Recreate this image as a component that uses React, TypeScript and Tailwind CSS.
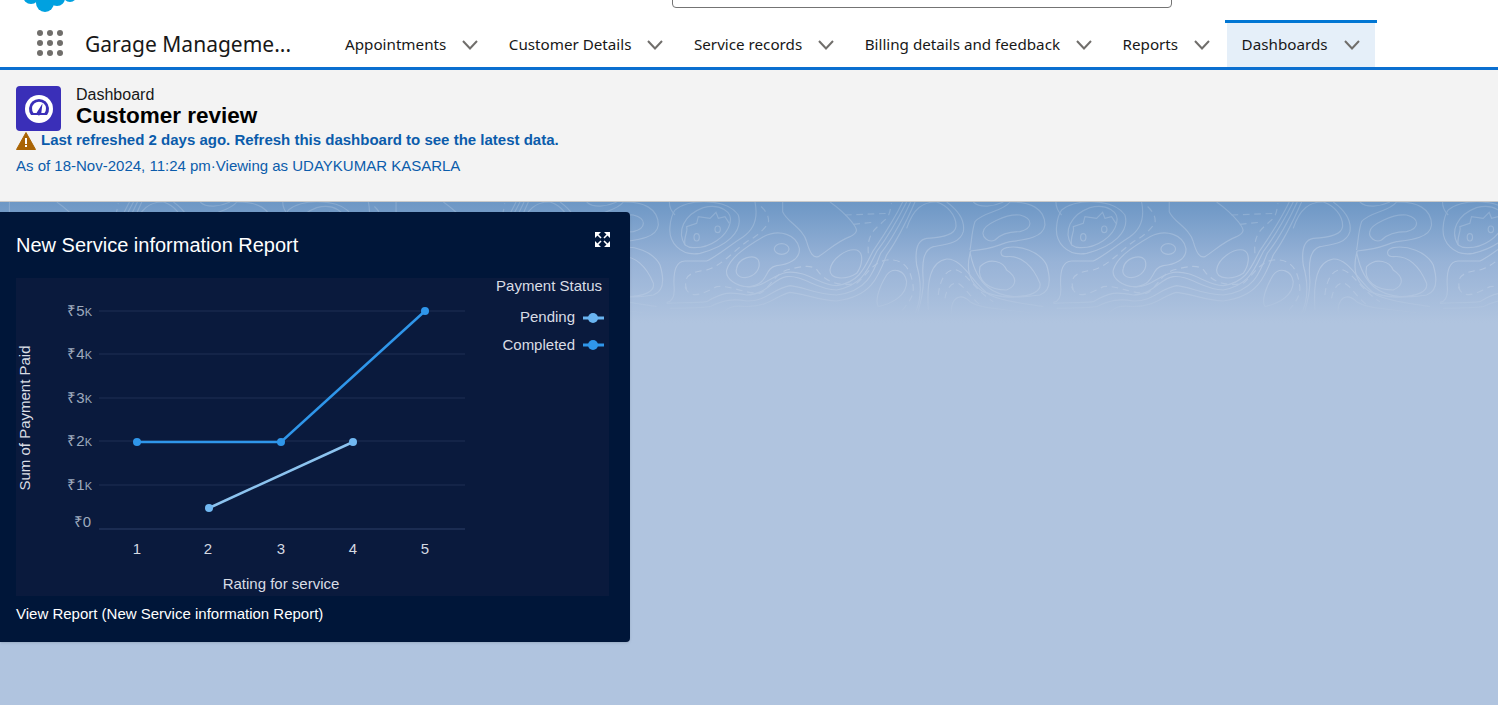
import React from "react";

const navItems = ["Appointments", "Customer Details", "Service records", "Billing details and feedback", "Reports"];

// contour lines of the banner, in 3x units, one tile is 1160 wide
const contours = [
  "M135 45 C180 10 290 10 325 60 C340 110 290 155 210 175 C150 185 115 140 120 95 C122 70 128 55 135 45",
  "M165 150 C140 110 160 60 220 38 C270 25 310 50 300 85 C290 125 240 160 190 158 C180 158 172 155 165 150",
  "M165 150 C160 125 175 110 170 95 L200 85 L205 65 L240 70 L258 52 L265 70 L285 65 L298 85",
  "M118 21 C118 40 125 50 135 60",
  "M375 21 C385 70 370 105 340 125 C300 150 260 185 230 198 L165 198 C140 198 130 225 132 270 C135 300 130 320 110 322",
  "M290 225 C300 190 340 160 400 125 C450 100 500 120 508 160 C512 195 470 210 440 212 C400 220 420 265 360 275 C320 278 285 250 290 225",
  "M320 220 C325 190 370 175 385 195 C395 220 375 245 345 248 C325 248 315 235 320 220",
  "M458 21 L458 50 C470 80 520 100 530 140 C540 175 550 190 565 185 C590 170 620 140 660 125 C690 110 680 100 665 80 C640 50 620 35 600 21",
  "M600 225 C605 190 650 160 680 165 C705 175 695 215 680 235 C650 255 600 255 600 225",
  "M830 21 C800 80 770 130 740 170 C715 220 700 270 620 285 C560 285 520 240 470 245 C430 250 410 300 350 300 C300 290 280 290 230 320 C190 325 150 322 110 325",
  "M818 21 C790 80 755 130 728 170 C705 215 690 262 620 272 C570 272 530 225 470 232 C425 240 400 280 350 275",
  "M842 21 C812 85 785 135 752 175 C730 235 710 290 620 300 C560 300 520 275 480 272 C430 280 410 320 350 318 C310 310 280 315 240 335 C200 340 160 340 120 340",
  "M855 21 C825 90 795 145 770 180 C745 245 725 305 620 318 C570 318 520 295 480 292 C440 300 420 335 350 335 C310 330 290 335 270 365",
  "M745 335 C735 320 745 280 770 240 C790 215 825 225 830 260 C830 300 790 325 745 335",
  "M830 100 C850 40 880 20 920 21 C950 30 980 60 978 95 C975 120 940 128 890 130 C860 135 855 170 860 210 C880 280 870 330 850 365",
  "M950 21 C990 50 1005 80 1000 110 C990 145 950 148 910 155 C880 165 875 200 880 260 C880 300 870 330 860 365",
  "M895 345 C890 260 900 200 950 192 C1000 190 1030 270 1080 300 C1120 320 1180 325 1240 335",
  "M965 360 C960 310 990 290 1020 320 C1060 345 1130 340 1240 360",
  "M1030 21 C1050 40 1090 35 1120 21",
  "M1140 21 C1200 20 1245 40 1245 90 C1240 130 1180 135 1140 140 C1100 150 1100 160 1022 168 C1010 210 1010 260 1060 290 C1110 310 1160 310 1230 300 C1260 290 1265 260 1250 210 C1230 170 1170 150 1130 158 C1105 165 1110 185 1130 185 C1175 180 1210 215 1230 265 C1235 290 1200 305 1150 305 C1100 300 1040 280 1020 170",
  "M1140 21 C1120 50 1060 50 1035 80 C1025 110 1025 140 1020 165",
  "M1060 110 C1060 90 1130 55 1170 60 C1210 70 1210 100 1170 110 C1130 110 1110 120 1095 135 C1075 145 1055 125 1060 110",
  "M1050 215 C1080 185 1120 200 1130 225 C1160 245 1165 270 1130 285 C1080 285 1040 260 1050 215",
];

const dashedContours = [
  "M170 285 C160 250 170 232 230 225 C270 215 310 170 350 140 C380 125 400 105 415 85 C420 60 400 40 388 30",
  "M165 275 C180 320 230 290 260 275 C300 270 340 295 390 295 C420 280 430 240 470 225 C510 215 550 205 565 230 C590 265 640 275 680 265 C710 240 730 200 770 195 C820 190 845 220 850 280 C850 310 830 330 805 360",
  "M645 60 L780 55",
  "M670 88 L730 82",
  "M715 175 C710 110 740 100 770 70 C785 50 780 30 785 25",
  "M925 300 C930 250 950 220 980 225 C1010 235 1040 290 1090 320",
  "M945 310 C950 280 965 260 985 265 C1010 280 1030 320 1060 335",
];

const tiles = [-2, -1, 0, 1, 2];

function ContourBanner() {
  return (
    <svg className="absolute left-0 top-0 h-[130px] w-full" viewBox="0 0 1498 130" fill="none">
      <defs>
        <linearGradient id="fade" x1="0" y1="0" x2="0" y2="1">
          <stop offset="0%" stopColor="#fff" stopOpacity={0.16} />
          <stop offset="50%" stopColor="#fff" stopOpacity={0.22} />
          <stop offset="72%" stopColor="#fff" stopOpacity={0.12} />
          <stop offset="88%" stopColor="#fff" stopOpacity={0} />
        </linearGradient>
        <mask id="fadeMask">
          <rect width="1498" height="130" fill="url(#fade)" />
        </mask>
      </defs>
      <g mask="url(#fadeMask)" stroke="#fff">
        {tiles.map((n) => (
          <g key={n} transform={`translate(${630 + n * 386.6} -7) scale(0.3333)`} strokeWidth={3.5}>
            {contours.map((d, i) => (
              <path key={i} d={d} />
            ))}
            {dashedContours.map((d, i) => (
              <path key={i} d={d} strokeDasharray="20 14" />
            ))}
            <ellipse cx="200" cy="127" rx="8" ry="11" />
            <ellipse cx="263" cy="103" rx="8" ry="10" />
            <ellipse cx="455" cy="162" rx="22" ry="16" />
          </g>
        ))}
      </g>
    </svg>
  );
}

function NavChevron() {
  return (
    <svg viewBox="0 0 16 10" className="ml-4 h-[10px] w-4" fill="none">
      <polyline points="1,1 8,8.5 15,1" stroke="#706e6b" strokeWidth={2} />
    </svg>
  );
}

const gridLines = [311, 354, 398, 441, 485];
const yLabels = [
  { y: 316, v: "₹5" },
  { y: 359, v: "₹4" },
  { y: 403, v: "₹3" },
  { y: 446, v: "₹2" },
  { y: 490, v: "₹1" },
];
const xLabels = [
  { x: 137, v: "1" },
  { x: 208, v: "2" },
  { x: 281, v: "3" },
  { x: 353, v: "4" },
  { x: 425, v: "5" },
];

function ServiceChart() {
  return (
    <svg viewBox="16 278 593 318" className="block h-[318px] w-[593px] bg-[#0a1a3d]" style={{ fontFamily: "'Liberation Sans', sans-serif" }}>
      {gridLines.map((y) => (
        <line key={y} x1="99" x2="465" y1={y} y2={y} stroke="#18284c" strokeWidth={1.5} />
      ))}
      <line x1="99" x2="465" y1="529" y2="529" stroke="#22335a" strokeWidth={1.5} />
      {yLabels.map((l) => (
        <text key={l.v} x="92" y={l.y} textAnchor="end" fontSize="15" fill="#9eaabd">
          {l.v}
          <tspan fontSize="11">K</tspan>
        </text>
      ))}
      <text x="91" y="527" textAnchor="end" fontSize="15" fill="#9eaabd">₹0</text>
      {xLabels.map((l) => (
        <text key={l.v} x={l.x} y="554" textAnchor="middle" fontSize="15" fill="#d4d9e2">{l.v}</text>
      ))}
      <text x="281" y="589" textAnchor="middle" fontSize="15" fill="#d9dde5">Rating for service</text>
      <text transform="translate(30 418) rotate(-90)" textAnchor="middle" fontSize="15" fill="#d9dde5">Sum of Payment Paid</text>

      <polyline points="137,442 281,442 425,311" fill="none" stroke="#2f96ea" strokeWidth={2.5} />
      <polyline points="209,508 353,442" fill="none" stroke="#8cc3ef" strokeWidth={2.5} />
      {[[137, 442], [281, 442], [425, 311]].map(([x, y]) => (
        <circle key={x} cx={x} cy={y} r={4} fill="#2f96ea" />
      ))}
      {[[209, 508], [353, 442]].map(([x, y]) => (
        <circle key={x} cx={x} cy={y} r={4} fill="#71b8f2" />
      ))}

      <text x="602" y="291" textAnchor="end" fontSize="15" fill="#d9dde5">Payment Status</text>
      <text x="575" y="322" textAnchor="end" fontSize="15" fill="#d9dde5">Pending</text>
      <text x="575" y="350" textAnchor="end" fontSize="15" fill="#d9dde5">Completed</text>
      <line x1="583" x2="604" y1="318" y2="318" stroke="#69b4f1" strokeWidth={3} />
      <circle cx="593" cy="318" r="5" fill="#69b4f1" />
      <line x1="583" x2="604" y1="345" y2="345" stroke="#2f96ea" strokeWidth={3} />
      <circle cx="593" cy="345" r="5" fill="#2f96ea" />
    </svg>
  );
}

export default function App() {
  return (
    <div className="h-[705px] w-[1498px] overflow-hidden bg-[#b0c4df] font-['Liberation_Sans',sans-serif]">
      {/* Top bar */}
      <header className="relative h-[70px] border-b-[3px] border-[#0b6fd0] bg-white">
        <svg className="absolute left-[20px] top-0 h-[14px] w-[62px]" viewBox="0 0 62 14" fill="#00a1e0">
          <circle cx="25" cy="3" r="9" />
          <circle cx="11" cy="-4" r="8" />
          <circle cx="37" cy="-2" r="8" />
          <circle cx="50" cy="-5" r="7" />
        </svg>
        <div className="absolute left-[672px] top-[-10px] h-[18px] w-[500px] rounded-[4px] border border-[#747474]" />
        <div className="flex h-full items-end pl-[37px] font-['Noto_Sans',sans-serif]">
          <div className="mb-[11px] grid w-[26px] grid-cols-3 gap-[4px]">
            {Array.from({ length: 9 }).map((_, i) => (
              <span key={i} className="h-[6px] w-[6px] rounded-full bg-[#706e6b]" />
            ))}
          </div>
          <div className="mb-[9px] ml-[22px] w-[244px] text-[21px] leading-[28px] text-[#181818]">Garage Manageme...</div>
          <nav className="flex h-[47px] items-stretch">
            {navItems.map((item) => (
              <div key={item} className="flex items-center pl-4 pr-[14.5px] pt-[2px] text-[15.2px] text-[#181818]">
                <span>{item}</span>
                <NavChevron />
              </div>
            ))}
            <div className="flex items-center border-t-[3px] border-[#0176d3]">
              <div className="mx-[2px] flex h-full items-center bg-[#e5eff9] px-[15px] pb-[1px] text-[15.2px] text-[#181818]">
                <span>Dashboards</span>
                <NavChevron />
              </div>
            </div>
          </nav>
        </div>
      </header>

      {/* Dashboard heading */}
      <section className="h-[132px] border-b border-[#c9c9c9] bg-[#f3f3f3] pl-4 pt-4">
        <div className="flex items-start">
          <div className="flex h-[45px] w-[45px] items-center justify-center rounded-[4px] bg-[#3a2fb8]">
            <svg viewBox="0 0 28 28" className="h-[28px] w-[28px]">
              <circle cx="14" cy="14" r="14" fill="#fff" />
              <path d="M6 20 A10 10 0 1 1 22 20 Z" fill="#3a2fb8" />
              <path d="M8.5 18 A7 7 0 1 1 19.5 18 Z" fill="#fff" />
              <path d="M11.5 18 L17.5 8.5 L16.3 18 A2.4 2.4 0 0 1 11.5 18" fill="#3a2fb8" />
            </svg>
          </div>
          <div className="ml-[15px]">
            <div className="text-[16px] leading-[17px] text-[#181818]">Dashboard</div>
            <div className="text-[22.5px] font-bold leading-[26px] text-black">Customer review</div>
          </div>
        </div>
        <div className="flex h-[20px] items-center text-[15px] font-bold text-[#0b5cab]">
          <svg viewBox="0 0 20 18" className="mr-[5px] h-[18px] w-[20px]">
            <path d="M10 0.5 L19.5 17.5 L0.5 17.5 Z" fill="#a96404" stroke="#a96404" strokeLinejoin="round" />
            <rect x="9" y="6" width="2" height="6" fill="#fff" />
            <rect x="9" y="13" width="2" height="2" fill="#fff" />
          </svg>
          <span className="mb-[2px]">Last refreshed 2 days ago. Refresh this dashboard to see the latest data.</span>
        </div>
        <div className="mt-[5px] text-[15px] leading-[20px] text-[#0b5cab]">As of 18-Nov-2024, 11:24 pm·Viewing as UDAYKUMAR KASARLA</div>
      </section>

      {/* Canvas */}
      <main className="relative h-[503px] bg-gradient-to-b from-[#6d97c5] from-0% via-[#98b3d7] via-[12%] to-[#b0c4df] to-[24%]">
        <ContourBanner />
        <div className="relative top-[10px] h-[430px] w-[630px] rounded-r-[4px] bg-[#001639] text-white shadow-sm">
          <div className="flex h-[66px] items-start justify-between pl-4 pr-[20px] pt-[21px]">
            <h2 className="text-[20px] leading-[24px]">New Service information Report</h2>
            <svg viewBox="0 0 15 15" className="mt-[-1px] h-[15px] w-[15px]" fill="#fff" stroke="#fff">
              <path d="M0 0h6L0 6z M15 0v6L9 0z M0 15V9l6 6z M15 15H9l6-6z" stroke="none" />
              <path d="M2 2l4 4 M13 2L9 6 M2 13l4-4 M13 13L9 9" strokeWidth={1.6} />
            </svg>
          </div>
          <div className="pl-4">
            <ServiceChart />
          </div>
          <div className="pl-4 pt-[9px] text-[15px] leading-[18px]">View Report (New Service information Report)</div>
        </div>
      </main>
    </div>
  );
}
